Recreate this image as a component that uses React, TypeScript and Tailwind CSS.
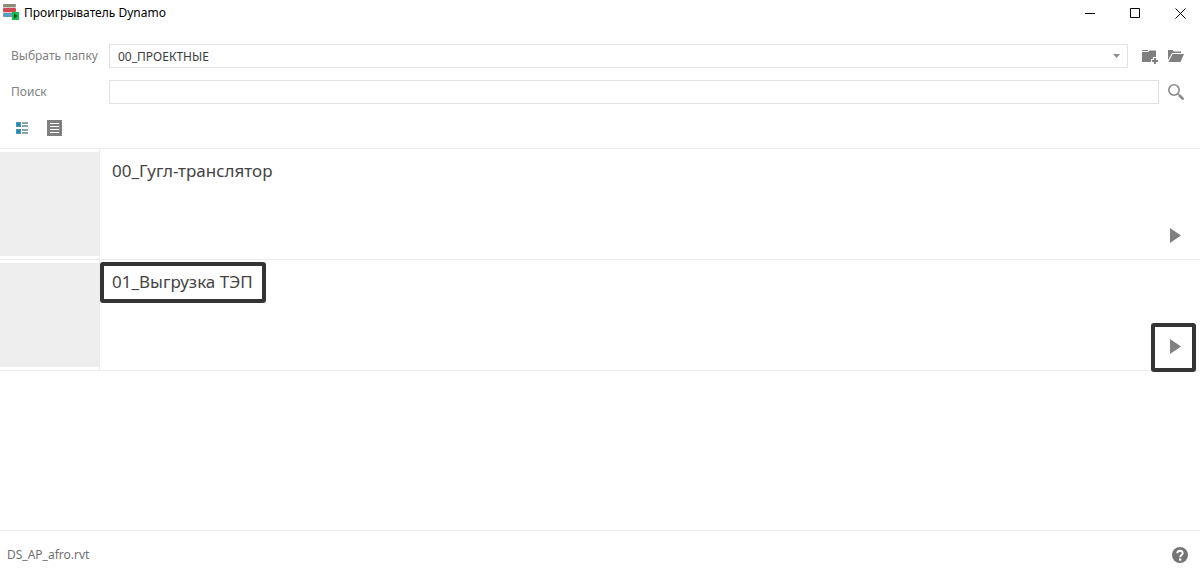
import type { ReactNode } from 'react';

const SCRIPTS = [
  { name: '00_Гугл-транслятор', marked: false },
  { name: '01_Выгрузка ТЭП', marked: true },
];

function AppLogo() {
  return (
    <svg width="16" height="18" viewBox="0 0 16 18" aria-hidden="true">
      <rect x="0" y="0" width="13" height="3" rx="1" fill="#8f8a78" />
      <rect x="0" y="3" width="13" height="1" fill="#d5d0c4" />
      <rect x="0" y="4" width="13" height="4" rx="1" fill="#cf4a52" />
      <rect x="0" y="8" width="13" height="1" fill="#e6c3c4" />
      <rect x="0" y="9" width="11" height="4" rx="1" fill="#5a9fc0" />
      <rect x="9" y="8" width="7" height="8" fill="#12c04f" />
      <path d="M11 9.500 L14.500 12 L11 14.500 Z" fill="#0a4a22" />
    </svg>
  );
}

function AddFolderIcon() {
  return (
    <svg width="16" height="16" viewBox="0 0 16 16" fill="#808080" aria-hidden="true">
      <path d="M0 2h6v1H0z" />
      <path d="M0 4h6l1.500-1.500H14V9h-3v2H9v3H0z" />
      <path d="M12 10h2v2h2v2h-2v2h-2v-2h-2v-2h2z" />
    </svg>
  );
}

function OpenFolderIcon() {
  return (
    <svg width="16" height="16" viewBox="0 0 16 16" fill="#808080" aria-hidden="true">
      <path d="M0 2h4.500L6 3.500h7V5H4L0 12z" />
      <path d="M4.500 6H16l-3.500 8H0.500z" />
    </svg>
  );
}

function SearchIcon() {
  return (
    <svg width="16" height="16" viewBox="0 0 16 16" fill="none" stroke="#8a8a8a" aria-hidden="true">
      <circle cx="6" cy="6" r="5.200" strokeWidth="1.600" />
      <path d="M9.500 9.500l1.500 1.500" strokeWidth="1.500" />
      <path d="M11 11l4.500 4.500" strokeWidth="2.500" />
    </svg>
  );
}

function DetailsIcon() {
  return (
    <svg width="12" height="12" viewBox="0 0 12 12" aria-hidden="true">
      <path d="M0 0h5v5H0zM0 7h5v5H0z" fill="#5b8fa8" />
      <path d="M1 1h3v3H1zM1 8h3v3H1z" fill="#0f8fd0" />
      <path d="M6 0h6v2H6zM6 3h6v2H6zM6 7h6v2H6zM6 10h6v2H6z" fill="#8aa5b0" />
    </svg>
  );
}

function ListIcon() {
  return (
    <svg width="15" height="16" viewBox="0 0 15 16" aria-hidden="true">
      <path d="M0 0h15v16H0z" fill="#808080" />
      <path d="M3 3h9v1H3zM3 6h9v1H3zM3 9h9v1H3zM3 12h9v1H3z" fill="#fff" />
    </svg>
  );
}

function HelpIcon() {
  return (
    <svg width="16" height="16" viewBox="0 0 16 16" aria-hidden="true">
      <circle cx="8" cy="8" r="8" fill="#757575" />
      <path d="M5.300 6.200c0-3.400 5.400-3.400 5.400 0 0 1.900-2.500 1.900-2.500 4" fill="none" stroke="#fff" strokeWidth="2" />
      <rect x="7" y="11.500" width="2.300" height="2.200" fill="#fff" />
    </svg>
  );
}

function IconButton({ label, children }: { label: string; children: ReactNode }) {
  return (
    <button type="button" aria-label={label} className="flex items-center justify-center">
      {children}
    </button>
  );
}

function TitleBar() {
  return (
    <header className="flex h-[26px] items-center justify-between pl-[3px] pr-[14px] text-black">
      <div className="flex items-center gap-[5px]">
        <AppLogo />
        <h1 className="text-xs">Проигрыватель Dynamo</h1>
      </div>
      <div className="flex items-center gap-[34px]">
        <IconButton label="Свернуть">
          <svg width="11" height="11" viewBox="0 0 11 11" aria-hidden="true">
            <path d="M0 5h10v1H0z" />
          </svg>
        </IconButton>
        <IconButton label="Развернуть">
          <svg width="11" height="11" viewBox="0 0 11 11" fill="none" stroke="#000" aria-hidden="true">
            <path d="M.5 .5h9v9h-9z" />
          </svg>
        </IconButton>
        <IconButton label="Закрыть">
          <svg width="11" height="11" viewBox="0 0 11 11" fill="none" stroke="#000" aria-hidden="true">
            <path d="M.5 .5l10 10M10.500 .5l-10 10" />
          </svg>
        </IconButton>
      </div>
    </header>
  );
}

function ScriptRow({ name, marked }: { name: string; marked: boolean }) {
  return (
    <li className="flex border-b border-[#ececec]">
      <div className="w-[100px] shrink-0 border-r border-[#ececec] py-[3px]">
        <div className="h-[104px] bg-[#eeeeee]" />
      </div>
      <div className="flex flex-1 items-start justify-between pl-3 pr-[19px]">
        <div className="relative mt-[10px]">
          <h2 className="text-[17px] leading-6 text-[#444444]">{name}</h2>
          {marked && (
            <span className="pointer-events-none absolute -bottom-[9px] -left-3 -right-[13px] -top-2 rounded-[3px] border-4 border-[#333433]" />
          )}
        </div>
        <div className="relative mb-4 self-end">
          <IconButton label={`Запустить ${name}`}>
            <svg width="11" height="15" viewBox="0 0 11 15" fill="#808080" aria-hidden="true">
              <path d="M0 0l11 7.500L0 15z" />
            </svg>
          </IconButton>
          {marked && (
            <span className="pointer-events-none absolute -bottom-[18px] -left-[19px] -right-[15px] -top-4 rounded-[3px] border-4 border-[#333433]" />
          )}
        </div>
      </div>
    </li>
  );
}

export default function App() {
  return (
    <div className="flex min-h-screen flex-col bg-white font-['Noto_Sans',sans-serif]">
      <TitleBar />

      <div className="flex flex-col gap-3 pl-[11px] pr-4 pt-[18px] text-xs text-[#808080]">
        <div className="flex h-6 items-center">
          <label htmlFor="folder" className="w-[98px] shrink-0">
            Выбрать папку
          </label>
          <div className="relative flex-1">
            <select
              id="folder"
              className="block h-6 w-full appearance-none border border-[#e3e3e3] bg-white px-2 pt-px text-[#3c3c3c]"
            >
              <option>00_ПРОЕКТНЫЕ</option>
            </select>
            <svg
              width="7"
              height="4"
              viewBox="0 0 7 4"
              className="pointer-events-none absolute right-2 top-[10px]"
              aria-hidden="true"
            >
              <path d="M0 0h7L3.500 4z" fill="#8c8c8c" />
            </svg>
          </div>
          <div className="ml-[14px] flex gap-[10px]">
            <IconButton label="Добавить папку">
              <AddFolderIcon />
            </IconButton>
            <IconButton label="Открыть папку">
              <OpenFolderIcon />
            </IconButton>
          </div>
        </div>

        <div className="flex h-6 items-center">
          <label htmlFor="search" className="w-[98px] shrink-0">
            Поиск
          </label>
          <input
            id="search"
            type="text"
            className="mr-[9px] h-6 min-w-0 flex-1 border border-[#e3e3e3] px-2 text-[#3c3c3c]"
          />
          <IconButton label="Найти">
            <SearchIcon />
          </IconButton>
        </div>
      </div>

      <div className="flex items-center gap-[19px] px-4 pb-3 pt-4">
        <IconButton label="Подробный вид">
          <DetailsIcon />
        </IconButton>
        <IconButton label="Список">
          <ListIcon />
        </IconButton>
      </div>

      <main className="flex-1 border-t border-[#ececec]">
        <ul>
          {SCRIPTS.map((script) => (
            <ScriptRow key={script.name} name={script.name} marked={script.marked} />
          ))}
        </ul>
      </main>

      <footer className="flex h-[49px] items-center justify-between border-t border-[#ececec] pl-[7px] pr-3 text-xs text-[#707070]">
        <span>DS_AP_afro.rvt</span>
        <IconButton label="Справка">
          <HelpIcon />
        </IconButton>
      </footer>
    </div>
  );
}
